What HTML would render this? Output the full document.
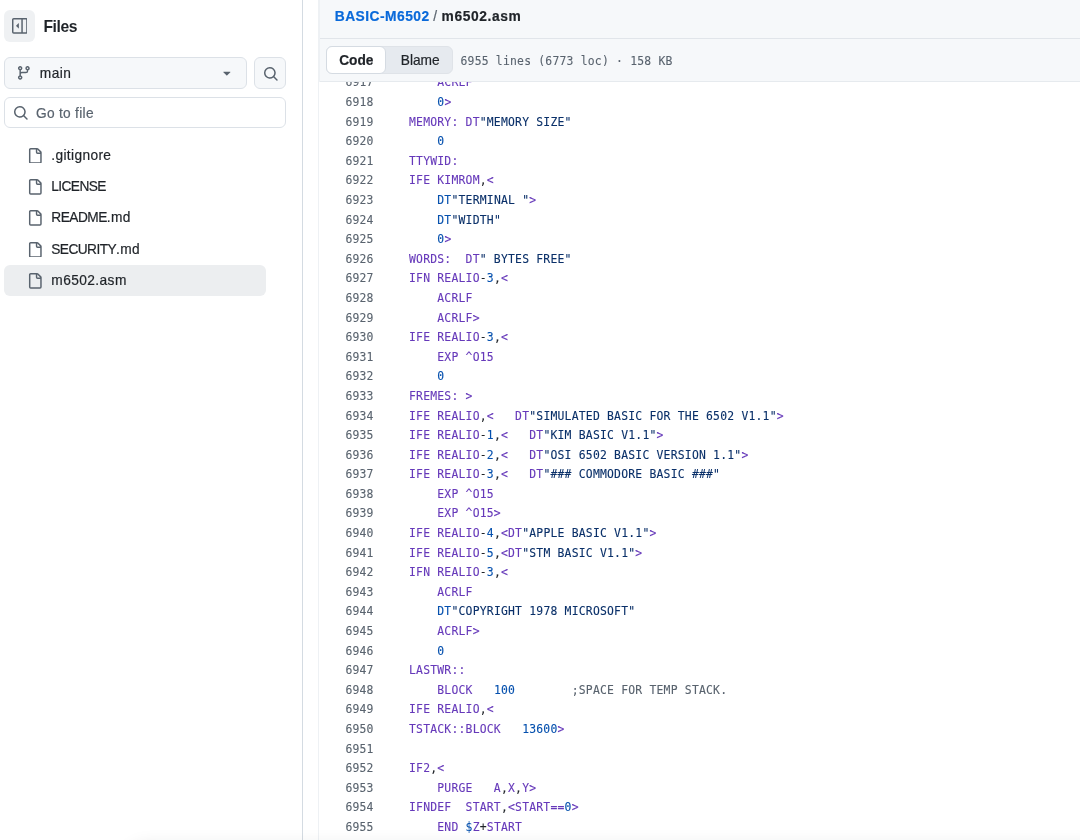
<!DOCTYPE html>
<html lang="en">
<head>
<meta charset="utf-8">
<title>BASIC-M6502/m6502.asm</title>
<style>
html,body{margin:0;padding:0;}
body{will-change:transform;width:1080px;height:840px;overflow:hidden;background:#fff;position:relative;
  font-family:"Liberation Sans",sans-serif;color:#1f2328;}
.abs{position:absolute;}
.t,.a{-webkit-text-stroke:0.2px currentColor;}
svg{display:block;}
/* sidebar */
#sideborder{left:302px;top:0;width:1px;height:840px;background:#d4dbe2;}
#collapse{left:4px;top:10.4px;width:31px;height:31.4px;border-radius:6px;background:#eff1f3;}
#collapse svg{position:absolute;left:7.5px;top:7.7px;}
#files{left:43.4px;top:15px;font-size:15.7px;letter-spacing:-.42px;font-weight:700;line-height:24px;color:#1f2328;white-space:nowrap;}
.btn{box-sizing:border-box;border:1px solid #dce1e7;border-radius:6px;background:#f6f8fa;}
#branch{left:4px;top:57px;width:243px;height:32px;}
#branch .t{position:absolute;left:34.8px;top:1px;line-height:30px;font-size:13.72px;letter-spacing:.45px;white-space:nowrap;}
#searchbtn{left:254px;top:57px;width:32px;height:32px;}
#gotofile{left:4px;top:96.5px;width:282px;height:31.4px;background:#fff;}
#gotofile .t{position:absolute;left:31px;top:1.2px;line-height:29.4px;font-size:13.72px;letter-spacing:.29px;color:#59636e;white-space:nowrap;}
.row{left:4px;width:262px;height:31.4px;border-radius:6px;}
.row svg{position:absolute;left:22.9px;top:8.1px;}
.row .t{position:absolute;left:47.3px;top:0;line-height:31.4px;font-size:13.72px;white-space:nowrap;}
.row.sel{background:#eceef0;}
/* main panel */
#panel{left:318px;top:-1px;width:800px;height:900px;box-sizing:border-box;border-left:2px solid #eef1f4;background:#fff;}
#crumb{left:320px;top:0;width:760px;height:38px;background:#f6f8fa;border-bottom:1px solid #e1e5ea;}
#crumb .t{position:absolute;left:14.7px;top:1px;line-height:32px;font-size:13.8px;letter-spacing:.48px;font-weight:700;white-space:nowrap;}
#crumb .t .r{color:#0969da;}
#crumb .t .s{color:#59636e;font-weight:400;padding:0 3.5px;}
#toolbar{left:320px;top:39px;width:760px;height:42px;background:#f6f8fa;border-bottom:1px solid #e6eaee;box-shadow:0 1px 0 #f3f5f7;}
#seg{left:6.3px;top:7.2px;width:126.6px;height:28px;border-radius:6px;background:#e6eaef;box-sizing:border-box;border:1px solid #dfe3e8;}
#seg .on{position:absolute;left:-1px;top:-1px;width:59.5px;height:28px;box-sizing:border-box;border:1px solid #d5dbe2;border-radius:6px;background:#fff;}
#seg .a{position:absolute;top:0px;line-height:28px;font-size:13.72px;white-space:nowrap;}
#info{left:140.5px;top:8.2px;line-height:28px;font-size:11.4px;letter-spacing:.214px;color:#59636e;white-space:pre;}
.mono{font-family:"DejaVu Sans Mono","Liberation Mono",monospace;-webkit-text-stroke:0.1px currentColor;}
#code{left:319px;top:82px;width:761px;height:758px;overflow:hidden;background:#fff;}
#code pre{margin:0;position:absolute;top:-8.6px;font-size:11.4px;letter-spacing:.214px;line-height:19.6px;white-space:pre;}
#ln{left:26.4px;color:#59636e;}
#src{left:90px;color:#1f2328;}
.e{color:#6639ba;} .c{color:#0550ae;} .s{color:#0a3069;} .m{color:#59636e;}
#shade{left:132px;top:849px;width:1100px;height:60px;border-radius:12px;box-shadow:0 0 20px rgba(31,35,40,0.16);}
</style>
</head>
<body>
<!-- SIDEBAR -->
<div class="abs" id="collapse"><svg width="15.7" height="15.7" viewBox="0 0 16 16" fill="#59636e"><path d="m4.177 7.823 2.396-2.396A.25.25 0 0 1 7 5.604v4.792a.25.25 0 0 1-.427.177L4.177 8.177a.25.25 0 0 1 0-.354Z"/><path d="M0 1.75C0 .784.784 0 1.75 0h12.5C15.216 0 16 .784 16 1.75v12.5A1.75 1.75 0 0 1 14.25 16H1.75A1.75 1.75 0 0 1 0 14.25Zm1.75-.25a.25.25 0 0 0-.25.25v12.5c0 .138.112.25.25.25H9.5v-13Zm12.5 13a.25.25 0 0 0 .25-.25V1.75a.25.25 0 0 0-.25-.25H11v13Z"/></svg></div>
<div class="abs" id="files">Files</div>

<div class="abs btn" id="branch">
  <svg class="abs" style="left:10.7px;top:7.3px" width="15.7" height="15.7" viewBox="0 0 16 16" fill="#59636e"><path d="M9.5 3.25a2.25 2.25 0 1 1 3 2.122V6A2.5 2.5 0 0 1 10 8.5H6a1 1 0 0 0-1 1v1.128a2.251 2.251 0 1 1-1.5 0V5.372a2.25 2.25 0 1 1 1.5 0v1.836A2.493 2.493 0 0 1 6 7h4a1 1 0 0 0 1-1v-.628A2.25 2.25 0 0 1 9.5 3.25Zm-6 0a.75.75 0 1 0 1.5 0 .75.75 0 0 0-1.5 0Zm8.25-.75a.75.75 0 1 0 0 1.5.75.75 0 0 0 0-1.5ZM4.25 12a.75.75 0 1 0 0 1.5.75.75 0 0 0 0-1.5Z"/></svg>
  <span class="t">main</span>
  <svg class="abs" style="left:213.5px;top:7.3px" width="15.7" height="15.7" viewBox="0 0 16 16" fill="#59636e"><path d="m4.427 7.427 3.396 3.396a.25.25 0 0 0 .354 0l3.396-3.396A.25.25 0 0 0 11.396 7H4.604a.25.25 0 0 0-.177.427Z"/></svg>
</div>
<div class="abs btn" id="searchbtn">
  <svg class="abs" style="left:7.6px;top:7.6px" width="15.7" height="15.7" viewBox="0 0 16 16" fill="#59636e"><path d="M10.68 11.74a6 6 0 0 1-7.922-8.982 6 6 0 0 1 8.982 7.922l3.04 3.04a.749.749 0 0 1-.326 1.275.749.749 0 0 1-.734-.215ZM11.5 7a4.499 4.499 0 1 0-8.997 0A4.499 4.499 0 0 0 11.5 7Z"/></svg>
</div>
<div class="abs btn" id="gotofile">
  <svg class="abs" style="left:7.6px;top:7.4px" width="15.7" height="15.7" viewBox="0 0 16 16" fill="#59636e"><path d="M10.68 11.74a6 6 0 0 1-7.922-8.982 6 6 0 0 1 8.982 7.922l3.04 3.04a.749.749 0 0 1-.326 1.275.749.749 0 0 1-.734-.215ZM11.5 7a4.499 4.499 0 1 0-8.997 0A4.499 4.499 0 0 0 11.5 7Z"/></svg>
  <span class="t">Go to file</span>
</div>

<div class="abs row" style="top:139.6px"><svg width="15.7" height="15.7" viewBox="0 0 16 16" fill="#59636e"><path d="M2 1.75C2 .784 2.784 0 3.750 0h6.586c.464 0 .909.184 1.237.513l2.914 2.914c.329.328.513.773.513 1.237v9.586A1.75 1.75 0 0 1 13.25 16h-9.5A1.75 1.75 0 0 1 2 14.250Zm1.750-.25a.25.25 0 0 0-.25.25v12.5c0 .138.112.25.25.25h9.5a.25.25 0 0 0 .25-.25V6h-2.750A1.75 1.75 0 0 1 9 4.250V1.500Zm6.750.062V4.250c0 .138.112.25.25.25h2.688l-.011-.013-2.914-2.914-.013-.011Z"/></svg><span class="t" style="letter-spacing:.36px">.gitignore</span></div>
<div class="abs row" style="top:171px"><svg width="15.7" height="15.7" viewBox="0 0 16 16" fill="#59636e"><path d="M2 1.75C2 .784 2.784 0 3.750 0h6.586c.464 0 .909.184 1.237.513l2.914 2.914c.329.328.513.773.513 1.237v9.586A1.75 1.75 0 0 1 13.25 16h-9.5A1.75 1.75 0 0 1 2 14.250Zm1.750-.25a.25.25 0 0 0-.25.25v12.5c0 .138.112.25.25.25h9.5a.25.25 0 0 0 .25-.25V6h-2.750A1.75 1.75 0 0 1 9 4.250V1.500Zm6.750.062V4.250c0 .138.112.25.25.25h2.688l-.011-.013-2.914-2.914-.013-.011Z"/></svg><span class="t" style="letter-spacing:-.6px">LICENSE</span></div>
<div class="abs row" style="top:202.3px"><svg width="15.7" height="15.7" viewBox="0 0 16 16" fill="#59636e"><path d="M2 1.75C2 .784 2.784 0 3.750 0h6.586c.464 0 .909.184 1.237.513l2.914 2.914c.329.328.513.773.513 1.237v9.586A1.75 1.75 0 0 1 13.25 16h-9.5A1.75 1.75 0 0 1 2 14.250Zm1.750-.25a.25.25 0 0 0-.25.25v12.5c0 .138.112.25.25.25h9.500a.25.25 0 0 0 .25-.25V6h-2.750A1.75 1.75 0 0 1 9 4.250V1.500Zm6.750.062V4.250c0 .138.112.25.25.25h2.688l-.011-.013-2.914-2.914-.013-.011Z"/></svg><span class="t"><span style="letter-spacing:-.54px">README</span><span style="letter-spacing:.42px">.md</span></span></div>
<div class="abs row" style="top:233.7px"><svg width="15.7" height="15.7" viewBox="0 0 16 16" fill="#59636e"><path d="M2 1.75C2 .784 2.784 0 3.750 0h6.586c.464 0 .909.184 1.237.513l2.914 2.914c.329.328.513.773.513 1.237v9.586A1.75 1.75 0 0 1 13.25 16h-9.5A1.75 1.75 0 0 1 2 14.250Zm1.750-.25a.25.25 0 0 0-.25.25v12.5c0 .138.112.25.25.25h9.500a.25.25 0 0 0 .25-.25V6h-2.750A1.75 1.75 0 0 1 9 4.250V1.500Zm6.750.062V4.250c0 .138.112.25.25.25h2.688l-.011-.013-2.914-2.914-.013-.011Z"/></svg><span class="t"><span style="letter-spacing:-.58px">SECURITY</span><span style="letter-spacing:.42px">.md</span></span></div>
<div class="abs row sel" style="top:265px"><svg width="15.7" height="15.7" viewBox="0 0 16 16" fill="#59636e"><path d="M2 1.75C2 .784 2.784 0 3.750 0h6.586c.464 0 .909.184 1.237.513l2.914 2.914c.329.328.513.773.513 1.237v9.586A1.75 1.75 0 0 1 13.25 16h-9.5A1.75 1.75 0 0 1 2 14.250Zm1.750-.25a.25.25 0 0 0-.25.25v12.5c0 .138.112.25.25.25h9.500a.25.25 0 0 0 .25-.25V6h-2.750A1.75 1.75 0 0 1 9 4.250V1.500Zm6.750.062V4.250c0 .138.112.25.25.25h2.688l-.011-.013-2.914-2.914-.013-.011Z"/></svg><span class="t" style="letter-spacing:.42px">m6502.asm</span></div>

<div class="abs" id="sideborder"></div>

<!-- MAIN PANEL -->
<div class="abs" id="panel"></div>
<div class="abs" id="crumb"><div class="t"><span class="r">BASIC-M6502</span><span class="s">/</span><span style="letter-spacing:.6px;margin-left:.6px">m6502.asm</span></div></div>
<div class="abs" id="toolbar">
  <div class="abs" id="seg"><div class="on"></div><span class="a" style="left:12px;font-weight:700;letter-spacing:-.1px">Code</span><span class="a" style="left:73.5px">Blame</span></div>
  <div class="abs mono" id="info">6955 lines (6773 loc) · 158 KB</div>
</div>
<div class="abs" id="code">
<pre class="mono" id="ln">6917
6918
6919
6920
6921
6922
6923
6924
6925
6926
6927
6928
6929
6930
6931
6932
6933
6934
6935
6936
6937
6938
6939
6940
6941
6942
6943
6944
6945
6946
6947
6948
6949
6950
6951
6952
6953
6954
6955</pre>
<pre class="mono" id="src"><span class="e">    ACRLF</span>
    <span class="c">0</span><span class="e">&gt;</span>
<span class="e">MEMORY: DT</span><span class="s">"MEMORY SIZE"</span>
    <span class="c">0</span>
<span class="e">TTYWID:</span>
<span class="e">IFE KIMROM</span>,<span class="e">&lt;</span>
    <span class="c">DT</span><span class="s">"TERMINAL "</span><span class="e">&gt;</span>
    <span class="c">DT</span><span class="s">"WIDTH"</span>
    <span class="c">0</span><span class="e">&gt;</span>
<span class="e">WORDS:  DT</span><span class="s">" BYTES FREE"</span>
<span class="e">IFN REALIO</span>-<span class="c">3</span>,<span class="e">&lt;</span>
<span class="e">    ACRLF</span>
<span class="e">    ACRLF&gt;</span>
<span class="e">IFE REALIO</span>-<span class="c">3</span>,<span class="e">&lt;</span>
<span class="e">    EXP ^O15</span>
    <span class="c">0</span>
<span class="e">FREMES: &gt;</span>
<span class="e">IFE REALIO</span>,<span class="e">&lt;   DT</span><span class="s">"SIMULATED BASIC FOR THE 6502 V1.1"</span><span class="e">&gt;</span>
<span class="e">IFE REALIO</span>-<span class="c">1</span>,<span class="e">&lt;   DT</span><span class="s">"KIM BASIC V1.1"</span><span class="e">&gt;</span>
<span class="e">IFE REALIO</span>-<span class="c">2</span>,<span class="e">&lt;   DT</span><span class="s">"OSI 6502 BASIC VERSION 1.1"</span><span class="e">&gt;</span>
<span class="e">IFE REALIO</span>-<span class="c">3</span>,<span class="e">&lt;   DT</span><span class="s">"### COMMODORE BASIC ###"</span>
<span class="e">    EXP ^O15</span>
<span class="e">    EXP ^O15&gt;</span>
<span class="e">IFE REALIO</span>-<span class="c">4</span>,<span class="e">&lt;DT</span><span class="s">"APPLE BASIC V1.1"</span><span class="e">&gt;</span>
<span class="e">IFE REALIO</span>-<span class="c">5</span>,<span class="e">&lt;DT</span><span class="s">"STM BASIC V1.1"</span><span class="e">&gt;</span>
<span class="e">IFN REALIO</span>-<span class="c">3</span>,<span class="e">&lt;</span>
<span class="e">    ACRLF</span>
    <span class="c">DT</span><span class="s">"COPYRIGHT 1978 MICROSOFT"</span>
<span class="e">    ACRLF&gt;</span>
    <span class="c">0</span>
<span class="e">LASTWR::</span>
<span class="e">    BLOCK</span>   <span class="c">100</span>        <span class="m">;SPACE FOR TEMP STACK.</span>
<span class="e">IFE REALIO</span>,<span class="e">&lt;</span>
<span class="e">TSTACK::BLOCK</span>   <span class="c">13600</span><span class="e">&gt;</span>

<span class="e">IF2</span>,<span class="e">&lt;</span>
<span class="e">    PURGE   A</span>,<span class="e">X</span>,<span class="e">Y&gt;</span>
<span class="e">IFNDEF  START</span>,<span class="e">&lt;START==</span><span class="c">0</span><span class="e">&gt;</span>
<span class="e">    END </span><span class="c">$</span><span class="e">Z</span>+<span class="e">START</span></pre>
</div>
<div class="abs" id="shade"></div>
</body>
</html>
